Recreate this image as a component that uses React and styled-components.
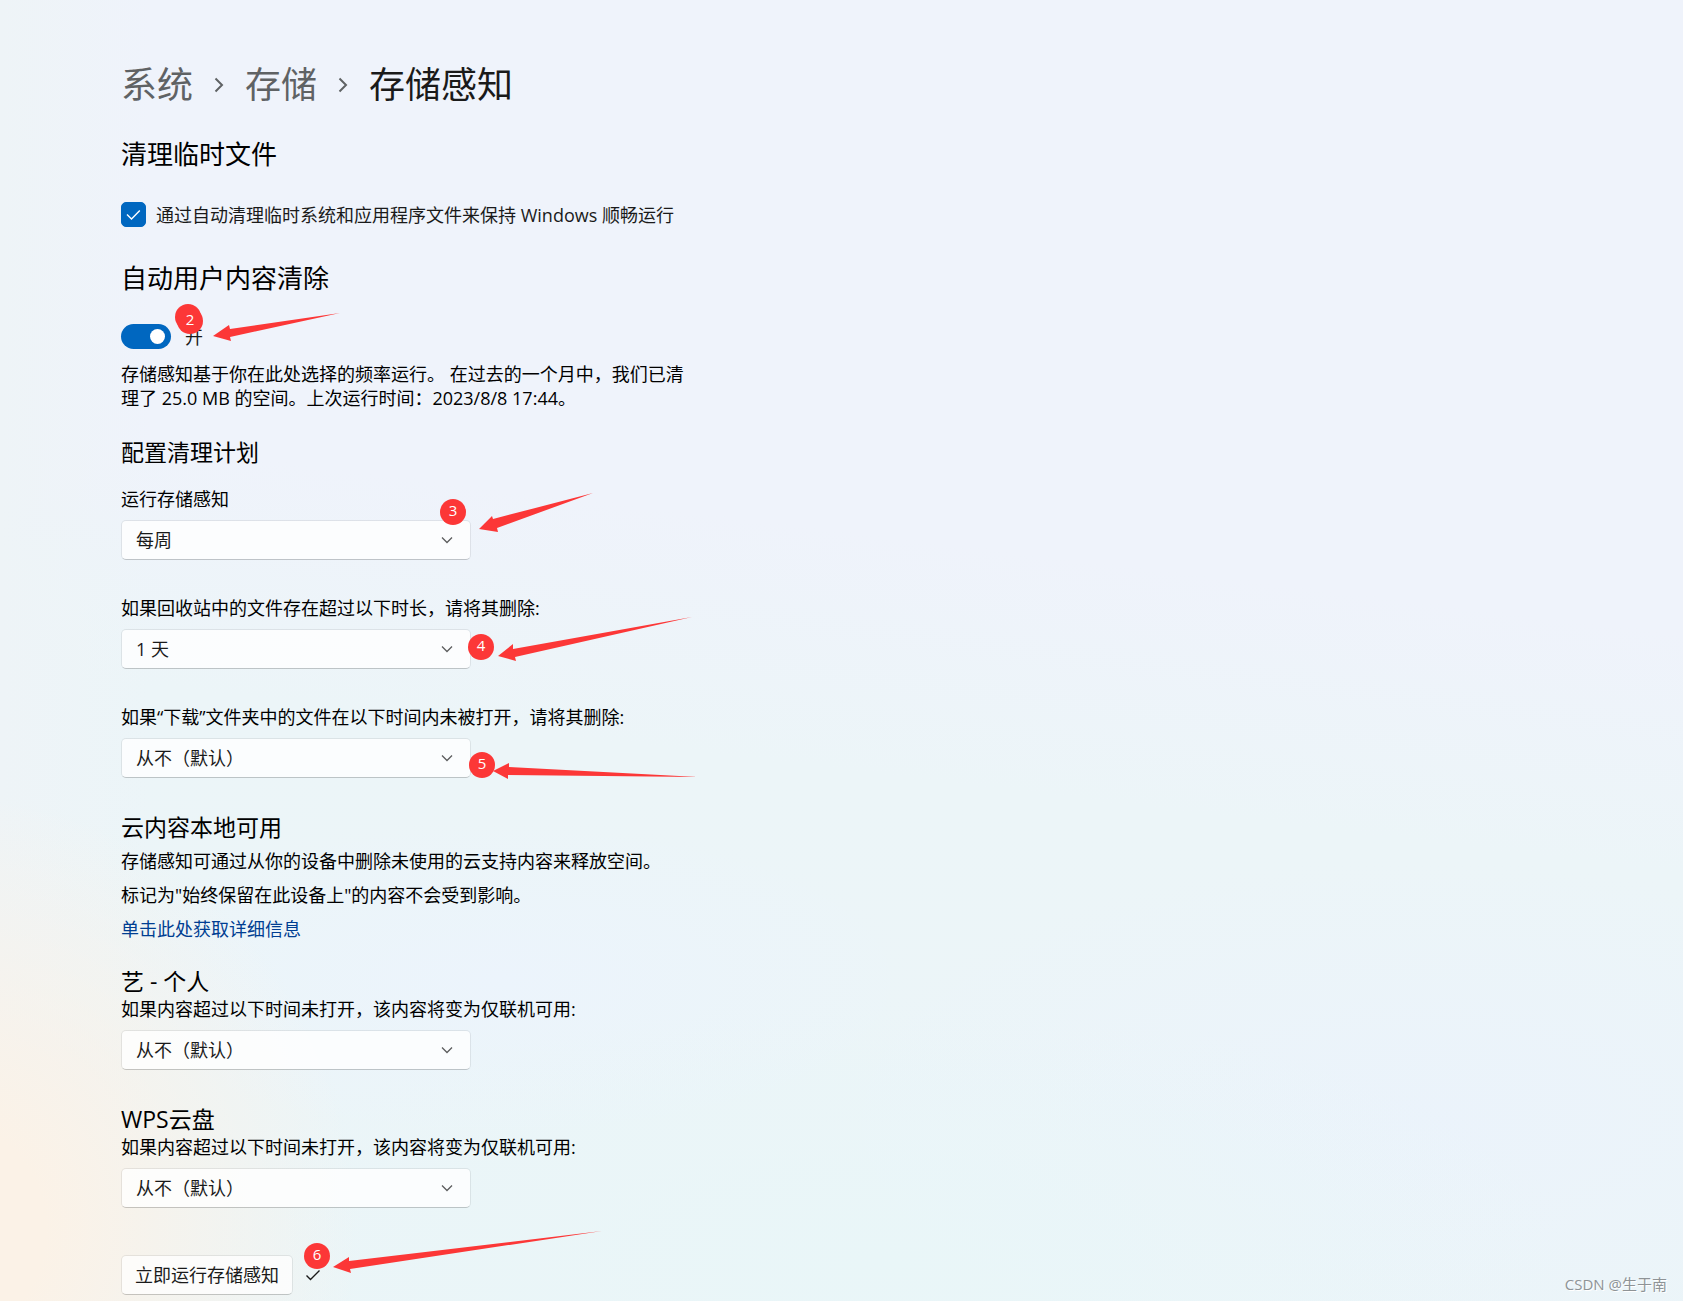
import React, { useState } from 'react';
import styled, { createGlobalStyle } from 'styled-components';

const GlobalStyle = createGlobalStyle`
  * {
    box-sizing: border-box;
  }

  body {
    margin: 0;
    color: #000;
    font-family: 'Open Sans', 'Noto Sans CJK SC', sans-serif;
    font-size: 18px;
    line-height: 24px;
  }

  h1, h2, h3, p {
    margin: 0;
    font-weight: 400;
  }

  button, input, select {
    margin: 0;
    font: inherit;
  }
`;

const Page = styled.main`
  position: relative;
  min-height: 100vh;
  padding: 61px 24px 6px 121px;
  background:
    radial-gradient(ellipse 420px 440px at -60px 1230px, #fbf2e7 25%, rgba(251, 242, 231, 0) 100%),
    radial-gradient(ellipse 700px 260px at 880px 1260px, #e9f6f8 0%, rgba(233, 246, 248, 0) 100%),
    radial-gradient(ellipse 420px 160px at 500px 980px, #ecf4fc 0%, rgba(236, 244, 252, 0) 100%),
    radial-gradient(ellipse 600px 260px at 1420px 1120px, #ebf3fb 0%, rgba(235, 243, 251, 0) 100%),
    linear-gradient(90deg, #eef4f7 0%, rgba(238, 244, 247, 0) 9%),
    linear-gradient(187deg, #eff3fb 0%, #eff3fb 42%, #ecf5f8 58%, #ebf5f8 100%);
`;

const Breadcrumb = styled.nav`
  display: flex;
  align-items: center;
  font-size: 36px;
  line-height: 48px;

  a {
    color: #5f6264;
    text-decoration: none;
  }

  svg {
    width: 10px;
    height: 16px;
    margin: 0 21px;
  }
`;

const PageTitle = styled.h1`
  font-size: 36px;
  line-height: 48px;
  color: #1a1a1a;
`;

const Heading = styled.h2`
  margin-top: ${(props) => props.$top}px;
  font-size: 26px;
  line-height: 32px;
`;

const SubHeading = styled.h3`
  margin-top: ${(props) => props.$top}px;
  font-size: 23px;
  line-height: 28px;
`;

const ControlRow = styled.div`
  position: relative;
  display: flex;
  align-items: center;
  gap: ${(props) => props.$gap}px;
  margin-top: ${(props) => props.$top}px;
  color: #1a1a1a;
`;

const CheckBoxWrap = styled.span`
  position: relative;
  display: flex;

  svg {
    position: absolute;
    inset: 0;
    width: 25px;
    height: 25px;
    pointer-events: none;
  }
`;

const CheckBox = styled.input`
  appearance: none;
  width: 25px;
  height: 25px;
  border: 1px solid #8a8a8a;
  border-radius: 5px;
  background: #fbfcfe;

  &:checked {
    border-color: #0067c0;
    background: #0067c0;
  }
`;

const Switch = styled.input`
  appearance: none;
  display: flex;
  align-items: center;
  width: 50px;
  height: 25px;
  padding: 0 6px;
  border-radius: 13px;
  background: #8a8a8a;

  &::before {
    content: '';
    width: 15px;
    height: 15px;
    border-radius: 50%;
    background: #fff;
  }

  &:checked {
    justify-content: flex-end;
    background: #0067c0;
  }
`;

const Summary = styled.p`
  max-width: 570px;
  margin-top: 13px;
`;

const Fields = styled.div`
  display: grid;
  gap: 36px;
  margin-top: ${(props) => props.$top}px;
`;

const FieldBox = styled.div`
  display: grid;
  gap: 9px;
  justify-items: start;
`;

const SelectWrap = styled.div`
  position: relative;
  width: 350px;
  max-width: 100%;
`;

const Select = styled.select`
  appearance: none;
  display: block;
  width: 100%;
  height: 40px;
  padding: 0 40px 0 14px;
  border: 1px solid rgba(0, 0, 0, 0.07);
  border-bottom-color: rgba(0, 0, 0, 0.2);
  border-radius: 5px;
  background: rgba(255, 255, 255, 0.8);
  background-clip: padding-box;
  color: #1a1a1a;
`;

const Arrow = styled.svg`
  position: absolute;
  top: 16px;
  right: 18px;
  width: 12px;
  height: 8px;
  pointer-events: none;
`;

const Notes = styled.div`
  display: grid;
  justify-items: start;
  gap: 10px;
  margin-top: 8px;
`;

const Link = styled.a`
  color: #003e92;
  text-decoration: none;
`;

const RunButton = styled.button`
  height: 40px;
  padding: 0 13px;
  border: 1px solid rgba(0, 0, 0, 0.07);
  border-bottom-color: rgba(0, 0, 0, 0.2);
  border-radius: 5px;
  background: rgba(255, 255, 255, 0.75);
  background-clip: padding-box;
  color: #1a1a1a;
`;

const DoneIcon = styled.svg`
  width: 16px;
  height: 14px;
`;

// origin of the drawing is the top left corner of the control it belongs to
const MarkLayer = styled.svg`
  position: absolute;
  top: 0;
  left: 0;
  width: 1px;
  height: 1px;
  overflow: visible;
  pointer-events: none;
  fill: #fc3737;

  text {
    fill: #fff;
    font-size: 15px;
    text-anchor: middle;
  }
`;

const Watermark = styled.footer`
  position: absolute;
  right: 16px;
  bottom: 5px;
  color: #8e9396;
  font-size: 15px;
  text-shadow: 1px 1px 0 #fff;
`;

const Chevron = () => (
  <svg viewBox="0 0 10 16" fill="none" stroke="#5f6264" strokeWidth="2" aria-hidden="true">
    <path d="M1.5 1.5 8 8l-6.5 6.5" />
  </svg>
);

const Mark = ({ number, x, y, arrow, children }) => (
  <MarkLayer>
    {children}
    <circle cx={x} cy={y} r="13" />
    <polygon points={arrow} />
    <text x={x} y={y + 4}>{number}</text>
  </MarkLayer>
);

const Field = ({ id, label, options, children }) => (
  <FieldBox>
    <label htmlFor={id}>{label}</label>
    <SelectWrap>
      <Select id={id}>
        {options.map((option) => (
          <option key={option}>{option}</option>
        ))}
      </Select>
      <Arrow viewBox="0 0 12 8" fill="none" stroke="#5c5d5e" strokeWidth="1.3">
        <path d="M1 1.5 6 6.5 11 1.5" />
      </Arrow>
      {children}
    </SelectWrap>
  </FieldBox>
);

const never = '从不（默认）';
const days = ['1 天', '14 天', '30 天', '60 天'];

const App = () => {
  const [cleanTemp, setCleanTemp] = useState(true);
  const [enabled, setEnabled] = useState(true);

  return (
    <>
      <GlobalStyle />
      <Page>
        <Breadcrumb>
          <a href="#system">系统</a>
          <Chevron />
          <a href="#storage">存储</a>
          <Chevron />
          <PageTitle>存储感知</PageTitle>
        </Breadcrumb>

        <Heading $top={29}>清理临时文件</Heading>
        <ControlRow $top={32} $gap={10}>
          <CheckBoxWrap>
            <CheckBox
              id="clean-temp"
              type="checkbox"
              checked={cleanTemp}
              onChange={(e) => setCleanTemp(e.target.checked)}
            />
            <svg viewBox="0 0 25 25" fill="none" stroke="#fff" strokeWidth="1.4">
              <path d="M6 12.5 10.5 17 18.8 8.5" />
            </svg>
          </CheckBoxWrap>
          <label htmlFor="clean-temp">通过自动清理临时系统和应用程序文件来保持 Windows 顺畅运行</label>
        </ControlRow>

        <Heading $top={35}>自动用户内容清除</Heading>
        <ControlRow $top={30} $gap={14}>
          <Switch
            id="auto-clean"
            type="checkbox"
            role="switch"
            checked={enabled}
            onChange={(e) => setEnabled(e.target.checked)}
          />
          <label htmlFor="auto-clean">{enabled ? '开' : '关'}</label>
          <Mark number="2" x={69} y={-3} arrow="92,12 108,1 109,5 219,-11 109,13 110,17">
            <circle cx="67" cy="-7" r="13" />
          </Mark>
        </ControlRow>
        <Summary>
          存储感知基于你在此处选择的频率运行。 在过去的一个月中，我们已清理了 25.0 MB
          的空间。上次运行时间：2023/8/8 17:44。
        </Summary>

        <SubHeading $top={28}>配置清理计划</SubHeading>
        <Fields $top={21}>
          <Field id="schedule" label="运行存储感知" options={['每周', '每天', '每月']}>
            <Mark number="3" x={332} y={-8} arrow="358,9 371,-4 372,-1 472,-27 376,8 377,12" />
          </Field>
          <Field id="recycle" label="如果回收站中的文件存在超过以下时长，请将其删除:" options={[...days, '从不']}>
            <Mark number="4" x={360} y={18} arrow="377,27 392,15 392,20 571,-12 394,28 395,32" />
          </Field>
          <Field
            id="downloads"
            label="如果“下载”文件夹中的文件在以下时间内未被打开，请将其删除:"
            options={[never, ...days]}
          >
            <Mark number="5" x={361} y={27} arrow="372,33 388,25 388,29 577,39 387,37 387,41" />
          </Field>
        </Fields>

        <SubHeading $top={35}>云内容本地可用</SubHeading>
        <Notes>
          <p>存储感知可通过从你的设备中删除未使用的云支持内容来释放空间。</p>
          <p>标记为"始终保留在此设备上"的内容不会受到影响。</p>
          <Link href="#more">单击此处获取详细信息</Link>
        </Notes>

        <SubHeading $top={26}>艺 - 个人</SubHeading>
        <Fields $top={2}>
          <Field
            id="personal"
            label="如果内容超过以下时间未打开，该内容将变为仅联机可用:"
            options={[never, ...days]}
          />
        </Fields>

        <SubHeading $top={35}>WPS云盘</SubHeading>
        <Fields $top={2}>
          <Field
            id="wps"
            label="如果内容超过以下时间未打开，该内容将变为仅联机可用:"
            options={[never, ...days]}
          />
        </Fields>

        <ControlRow $top={47} $gap={12}>
          <RunButton type="button">立即运行存储感知</RunButton>
          <DoneIcon viewBox="0 0 16 14" fill="none" stroke="#1a1a1a" strokeWidth="1.4">
            <path d="M1.5 7.5 5.5 11.5 14.5 2.5" />
          </DoneIcon>
          <Mark number="6" x={196} y={1} arrow="212,12 228,2 228,6 481,-24 229,14 230,18" />
        </ControlRow>

        <Watermark>CSDN @生于南</Watermark>
      </Page>
    </>
  );
};

export default App;
